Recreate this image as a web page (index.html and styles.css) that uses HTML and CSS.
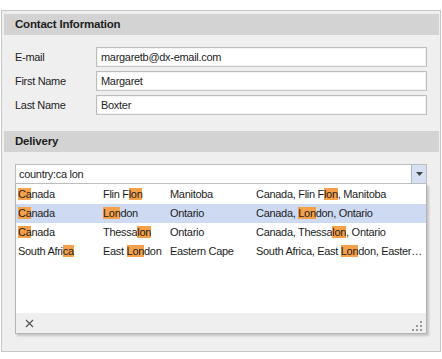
FILE: index.html
```html
<!DOCTYPE html>
<html lang="en">
<head>
    <meta charset="UTF-8">
    <title>Delivery Form</title>
    <link rel="stylesheet" href="styles.css">
</head>
<body>
    <div class="panel">
        <div class="group-header">Contact Information</div>
        <div class="form-body">
            <div class="form-row">
                <label for="email">E-mail</label>
                <div class="text-box">margaretb@dx-email.com</div>
            </div>
            <div class="form-row">
                <label for="firstName">First Name</label>
                <div class="text-box">Margaret</div>
            </div>
            <div class="form-row">
                <label for="lastName">Last Name</label>
                <div class="text-box">Boxter</div>
            </div>
        </div>

        <div class="group-header">Delivery</div>
        <div class="delivery-body">
            <div class="combo">
                <div class="combo-text">country:ca lon</div>
                <div class="combo-button">
                    <svg width="7" height="4" viewBox="0 0 7 4"><path d="M0 0h7L3.5 4z" fill="#444"/></svg>
                </div>
            </div>
            <div class="popup">
                <div class="list">
                    <div class="item">
                        <span class="c1"><b>Ca</b>nada</span>
                        <span class="c2">Flin F<b>lon</b></span>
                        <span class="c3">Manitoba</span>
                        <span class="c4">Canada, Flin F<b>lon</b>, Manitoba</span>
                    </div>
                    <div class="item selected">
                        <span class="c1"><b>Ca</b>nada</span>
                        <span class="c2"><b>Lon</b>don</span>
                        <span class="c3">Ontario</span>
                        <span class="c4">Canada, <b>Lon</b>don, Ontario</span>
                    </div>
                    <div class="item">
                        <span class="c1"><b>Ca</b>nada</span>
                        <span class="c2">Thessa<b>lon</b></span>
                        <span class="c3">Ontario</span>
                        <span class="c4">Canada, Thessa<b>lon</b>, Ontario</span>
                    </div>
                    <div class="item">
                        <span class="c1">South Afri<b>ca</b></span>
                        <span class="c2">East <b>Lon</b>don</span>
                        <span class="c3">Eastern Cape</span>
                        <span class="c4">South Africa, East <b>Lon</b>don, Eastern Cape</span>
                    </div>
                </div>
                <div class="popup-footer">
                    <svg class="close" width="9" height="9" viewBox="0 0 9 9"><path d="M1 1l7 7M8 1L1 8" stroke="#555" stroke-width="1.2"/></svg>
                    <svg class="grip" width="11" height="11" viewBox="0 0 11 11" fill="#999">
                        <rect x="8" y="0" width="2" height="2"/>
                        <rect x="4" y="4" width="2" height="2"/><rect x="8" y="4" width="2" height="2"/>
                        <rect x="0" y="8" width="2" height="2"/><rect x="4" y="8" width="2" height="2"/><rect x="8" y="8" width="2" height="2"/>
                    </svg>
                </div>
            </div>
        </div>
    </div>
</body>
</html>
```

FILE: styles.css
```css
body {
    margin: 0;
    background: #fff;
    font-family: "Liberation Sans", Arial, sans-serif;
    font-size: 11px;
    letter-spacing: -0.3px;
    color: #1e1e1e;
}

.panel {
    margin: 10px 1px 0 1px;
    height: 337px;
    border: 1px solid #c6c6c6;
    background: #efefef;
    padding: 3px 1px 0 2px;
    box-sizing: content-box;
}

.group-header {
    height: 21px;
    line-height: 21px;
    background: #d3d3d3;
    padding-left: 11px;
    font-weight: bold;
    font-size: 11.5px;
    letter-spacing: -0.2px;
}

.form-body {
    padding: 12px 12px 16px 11px;
    display: flex;
    flex-direction: column;
    gap: 4px;
}

.form-row {
    display: flex;
    align-items: center;
    height: 20px;
}

.form-row label {
    width: 81px;
}

.text-box {
    flex-grow: 1;
    height: 20px;
    line-height: 18px;
    box-sizing: border-box;
    border: 1px solid #bdbdbd;
    border-bottom-color: #c4c4c4;
    box-shadow: inset 0 0 0 1px #f4f4f4;
    background: #fff;
    padding-left: 4px;
}

.delivery-body {
    padding: 12px 12px 0 11px;
}

.combo {
    display: flex;
    height: 20px;
    box-sizing: border-box;
    border: 1px solid #bdbdbd;
    background: #fff;
}

.combo-text {
    flex-grow: 1;
    line-height: 18px;
    padding-left: 3px;
}

.combo-button {
    width: 14px;
    background: #d5e0f3;
    border-left: 1px solid #a9b6cc;
    display: flex;
    align-items: center;
    justify-content: center;
}

.popup {
    height: 150px;
    box-sizing: border-box;
    border: 1px solid #b4b4b4;
    border-top: none;
    background: #fff;
    box-shadow: 2px 2px 2px rgba(0, 0, 0, 0.18);
    display: flex;
    flex-direction: column;
}

.list {
    flex-grow: 1;
    padding-top: 1px;
}

.item {
    display: flex;
    height: 19px;
    line-height: 19px;
    padding-left: 2px;
    white-space: nowrap;
}

.item.selected {
    background: #cddaf2;
}

.item b {
    font-weight: normal;
    background: #f7a04a;
}

.c1 { width: 85px; }
.c2 { width: 67px; }
.c3 { width: 86px; }

.c4 {
    width: 168px;
    overflow: hidden;
    text-overflow: ellipsis;
}

.popup-footer {
    height: 20px;
    background: #efefef;
    display: flex;
    align-items: center;
    justify-content: space-between;
    padding: 0 3px 0 9px;
}

.grip {
    margin-top: 7px;
}
```
